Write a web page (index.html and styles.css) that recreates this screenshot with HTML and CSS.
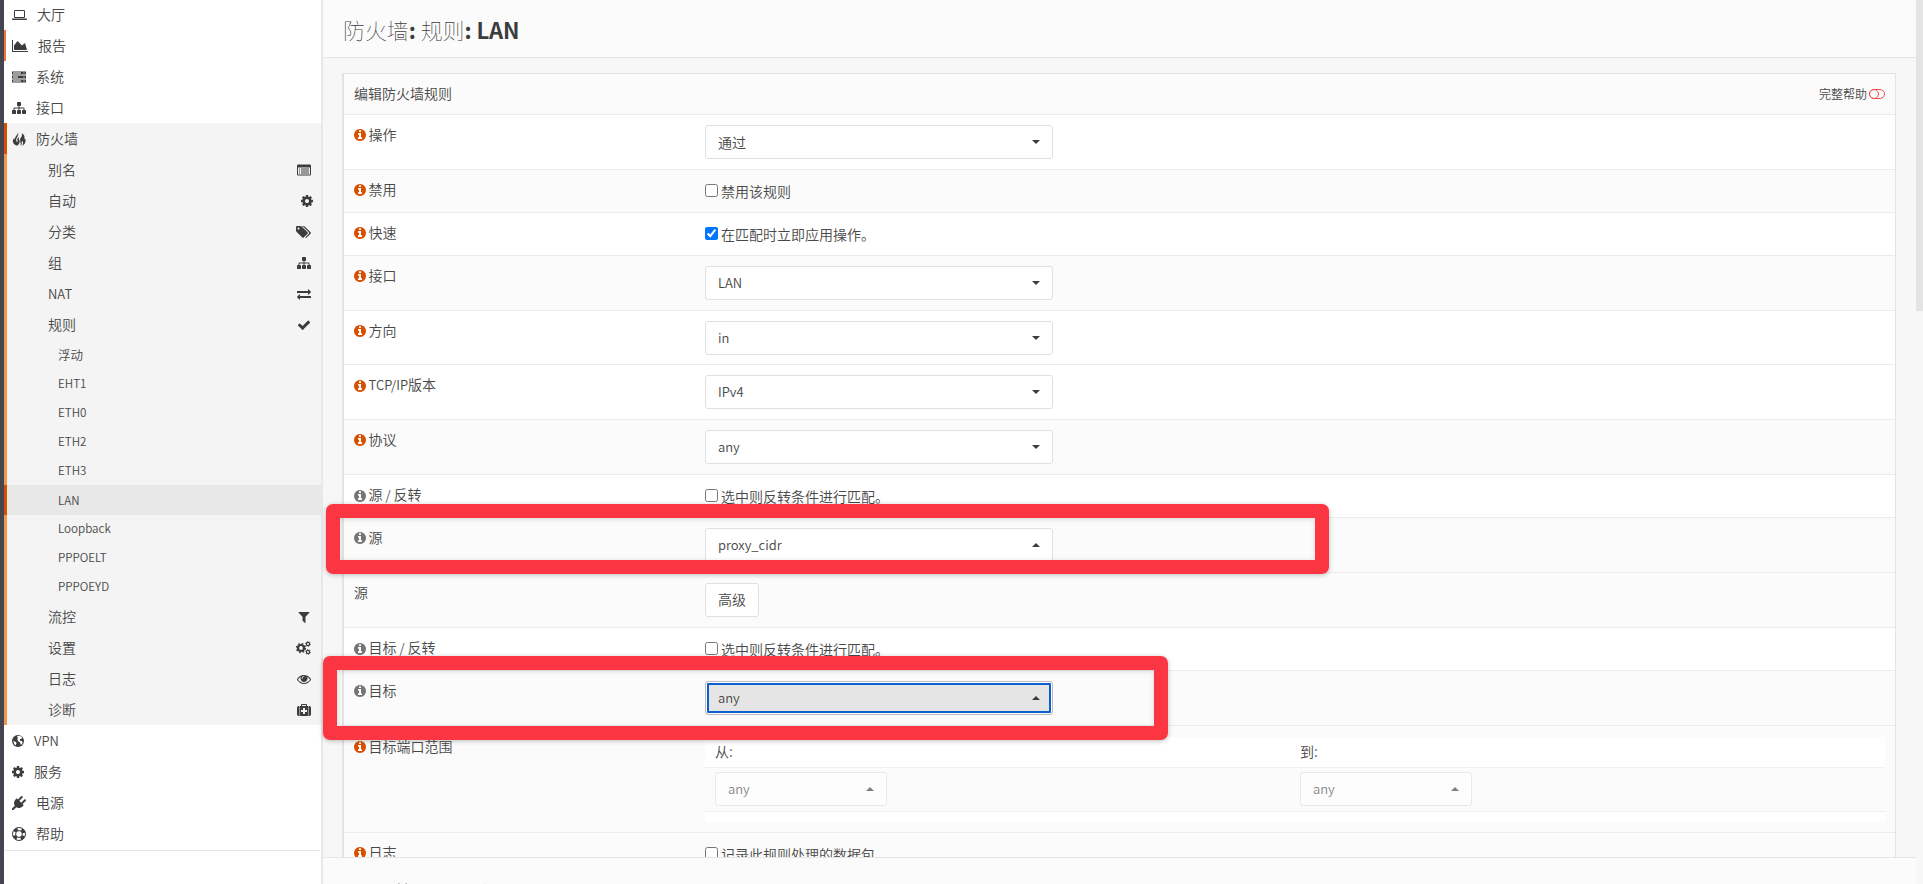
FILE: index.html
```html
<!DOCTYPE html>
<html lang="zh-CN">

<head>
    <meta charset="UTF-8">
    <meta name="viewport" content="width=device-width, initial-scale=1.0">
    <title>防火墙: 规则: LAN</title>
    <link rel="stylesheet" href="styles.css">
</head>

<body>
    <!-- icons -->
    <svg class="sprite">
        <symbol id="laptop" viewBox="0 0 1920 1792"><path d="M416 1280q-66 0-113-47t-47-113v-704q0-66 47-113t113-47h1088q66 0 113 47t47 113v704q0 66-47 113t-113 47h-1088zm-32-864v704q0 13 9.500 22.500t22.500 9.500h1088q13 0 22.500-9.500t9.500-22.500v-704q0-13-9.500-22.500t-22.500-9.500h-1088q-13 0-22.500 9.500t-9.500 22.500zm1376 928h160v96q0 40-47 68t-113 28h-1600q-66 0-113-28t-47-68v-96h1760z"/></symbol>
        <symbol id="area" viewBox="0 0 2048 1792"><path d="M2048 1536v128h-2048v-1536h128v1408h1920zm-384-1024l256 896h-1664v-576l448-576 576 576z"/></symbol>
        <symbol id="server" viewBox="0 -64 1792 1792"><path fill-rule="evenodd" d="M0 128h1792v384h-1792zM128 256v128h1024v-128zM1472 256v128h128v-128zM0 640h1792v384h-1792zM128 768v128h640v-128zM1472 768v128h128v-128zM0 1152h1792v384h-1792zM128 1280v128h1024v-128zM1472 1280v128h128v-128z"/></symbol>
        <symbol id="sitemap" viewBox="0 0 1792 1792"><path d="M1792 1248v320q0 40-28 68t-68 28h-320q-40 0-68-28t-28-68v-320q0-40 28-68t68-28h96v-192h-512v192h96q40 0 68 28t28 68v320q0 40-28 68t-68 28h-320q-40 0-68-28t-28-68v-320q0-40 28-68t68-28h96v-192h-512v192h96q40 0 68 28t28 68v320q0 40-28 68t-68 28h-320q-40 0-68-28t-28-68v-320q0-40 28-68t68-28h96v-192q0-52 38-90t90-38h512v-192h-96q-40 0-68-28t-28-68v-320q0-40 28-68t68-28h320q40 0 68 28t28 68v320q0 40-28 68t-68 28h-96v192h512q52 0 90 38t38 90v192h96q40 0 68 28t28 68z"/></symbol>
        <symbol id="fire" viewBox="0 0 14 14"><path d="M5.800 0.300C6.700 2 6.300 3.300 5.400 4.700 4.400 6.300 3.900 7.500 4.300 9c.2.800.7 1.200.9 1.100.5-.2.400-1 .2-1.700-.3-1.200.2-2.400 1.400-3.600-.2 1.300 0 2.100.5 3.200.9 1.900.2 3.900-2.100 5.700C2.800 13.200 1 11.900.9 9.600.8 8.200 1.300 7 2.200 5.700c0 .9.100 1.500.6 1.800C3 5.600 3.700 4.500 4.700 3.300 5.500 2.400 5.900 1.600 5.800.3zM9.500 1.200c2.200.9 3.100 2.300 3 4.100 0 .8-.2 1.400-.2 1.900.4-.1.600-.4.700-.9.600 1.200.7 2.500.4 3.700-.4 1.700-1.700 3.200-3.600 3.800 1-.9 1.400-1.900 1.200-3.100-.1-.7-.5-1.200-.6-1.900-.5.400-.8 1.200-.6 1.900.2 1-.1 2-1.400 3 .4-1 .4-1.800.2-2.900-.3-1.400-.7-2.500-.4-3.900.2-1.100 1-1.800 1.500-2.700.4-.9.500-1.900-.2-3z"/></symbol>
        <symbol id="listalt" viewBox="0 0 14 14"><path fill-rule="evenodd" d="M1.300 1.500h11.400q1.300 0 1.300 1.300v8.400q0 1.300-1.300 1.300h-11.400q-1.300 0-1.300-1.300v-8.400q0-1.300 1.300-1.300zM1 4.500v6.700q0 .3.300.3h11.400q.3 0 .3-.3v-6.700zM2 5.500h1v1h-1zM4 5.500h8v1h-8zM2 7.500h1v1h-1zM4 7.500h8v1h-8zM2 9.500h1v1h-1zM4 9.500h8v1h-8z"/></symbol>
        <symbol id="cog" viewBox="128 0 1536 1792"><path d="M1152 896q0-106-75-181t-181-75-181 75-75 181 75 181 181 75 181-75 75-181zm512-109v222q0 12-8 23t-20 13l-185 28q-19 54-39 91 35 50 107 138 10 12 10 25t-9 23q-27 37-99 108t-94 71q-12 0-26-9l-138-108q-44 23-91 38-16 136-29 186-7 28-36 28h-222q-14 0-24.500-8.500t-11.500-21.500l-28-184q-49-16-90-37l-141 107q-10 9-25 9-14 0-25-11-126-114-165-168-7-10-7-23 0-12 8-23 15-21 51-66.500t54-70.500q-27-50-41-99l-183-27q-13-2-21-12.500t-8-23.500v-222q0-12 8-23t19-13l186-28q14-46 39-92-40-57-107-138-10-12-10-24 0-10 9-23 26-36 98.500-107.500t94.500-71.500q13 0 26 10l138 107q44-23 91-38 16-136 29-186 7-28 36-28h222q14 0 24.500 8.500t11.500 21.500l28 184q49 16 90 37l142-107q9-9 24-9 13 0 25 10 129 119 165 170 7 8 7 22 0 12-8 23-15 21-51 66.500t-54 70.500q26 50 41 98l183 28q13 2 21 12.500t8 23.500z"/></symbol>
        <symbol id="tags" viewBox="0 0 1920 1792"><path d="M448 448q0-53-37.500-90.500t-90.500-37.500-90.500 37.500-37.500 90.500 37.500 90.500 90.500 37.500 90.500-37.500 37.500-90.500zm1067 576q0 53-37 90l-491 492q-39 37-91 37-53 0-90-37l-715-716q-38-37-64.500-101t-26.500-117v-416q0-52 38-90t90-38h416q53 0 117 26.500t102 64.500l715 714q37 39 37 91zm384 0q0 53-37 90l-491 492q-39 37-91 37-36 0-59-14t-53-45l470-470q37-37 37-90 0-52-37-91l-715-714q-38-38-102-64.500t-117-26.500h224q53 0 117 26.500t102 64.500l715 714q37 39 37 91z"/></symbol>
        <symbol id="exchange" viewBox="0 0 1792 1792"><path d="M1792 1184v192q0 13-9.500 22.500t-22.500 9.500h-1376v192q0 13-9.500 22.500t-22.500 9.500q-12 0-24-10l-319-320q-9-9-9-22 0-14 9-23l320-320q9-9 23-9 13 0 22.500 9.500t9.500 22.500v192h1376q13 0 22.500 9.500t9.500 22.500zm0-544q0 14-9 23l-320 320q-9 9-23 9-13 0-22.500-9.500t-9.500-22.500v-192h-1376q-13 0-22.500-9.500t-9.500-22.500v-192q0-13 9.500-22.500t22.500-9.500h1376v-192q0-14 9-23t23-9q12 0 24 10l319 319q9 9 9 23z"/></symbol>
        <symbol id="check" viewBox="0 0 1792 1792"><path d="M1671 566q0 40-28 68l-724 724-136 136q-28 28-68 28t-68-28l-136-136-362-362q-28-28-28-68t28-68l136-136q28-28 68-28t68 28l294 295 656-657q28-28 68-28t68 28l136 136q28 28 28 68z"/></symbol>
        <symbol id="filter" viewBox="0 0 1792 1792"><path d="M1595 295q17 41-14 70l-493 493v742q0 42-39 59-13 5-25 5-27 0-45-19l-256-256q-19-19-19-45v-486l-493-493q-31-29-14-70 17-39 59-39h1280q42 0 59 39z"/></symbol>
        <symbol id="cogs" viewBox="0 0 15 14"><g fill="none" stroke="currentColor"><circle cx="5" cy="7" r="3" stroke-width="2.200"/><circle cx="5" cy="7" r="4.500" stroke-width="1.300" stroke-dasharray="1.770"/><circle cx="12" cy="3" r="1.600" stroke-width="1.200"/><circle cx="12" cy="3" r="2.500" stroke-width=".8" stroke-dasharray="1.300"/><circle cx="12" cy="11" r="1.600" stroke-width="1.200"/><circle cx="12" cy="11" r="2.500" stroke-width=".8" stroke-dasharray="1.300"/></g></symbol>
        <symbol id="eye" viewBox="0 0 1792 1792"><path d="M1664 960q-152-236-381-353 61 104 61 225 0 185-131.500 316.500t-316.500 131.500-316.500-131.500-131.500-316.500q0-121 61-225-229 117-381 353 133 205 333.500 326.500t434.500 121.500 434.500-121.500 333.500-326.500zm-720-384q0-20-14-34t-34-14q-125 0-214.500 89.500t-89.500 214.500q0 20 14 34t34 14 34-14 14-34q0-86 61-147t147-61q20 0 34-14t14-34zm848 384q0 34-20 69-140 230-376.500 368.500t-499.500 138.500-499.500-139-376.500-368q-20-35-20-69t20-69q140-229 376.500-368t499.500-139 499.500 139 376.500 368q20 35 20 69z"/></symbol>
        <symbol id="medkit" viewBox="0 0 1792 1792"><path d="M1280 1120v-192q0-14-9-23t-23-9h-224v-224q0-14-9-23t-23-9h-192q-14 0-23 9t-9 23v224h-224q-14 0-23 9t-9 23v192q0 14 9 23t23 9h224v224q0 14 9 23t23 9h192q14 0 23-9t9-23v-224h224q14 0 23-9t9-23zm-640-736h512v-128h-512v128zm-384 0v1280h-32q-92 0-158-66t-66-158v-832q0-92 66-158t158-66h32zm1216 0v1280h-1152v-1280h192v-160q0-40 28-68t68-28h576q40 0 68 28t28 68v160h192zm320 224v832q0 92-66 158t-158 66h-32v-1280h32q92 0 158 66t66 158z"/></symbol>
        <symbol id="globe" viewBox="0 0 12 14"><circle cx="6" cy="7" r="6"/><path class="land" d="M5 2.200l2.300-.4 2 .7 1 1.400-1.100 1-.7-.2-.8 1.100.9 1.400 1.200-.1.900.8-.5 1.700-1.400 1.300-.4-1.600-1.200-1.500-1.400-.8.100-1.300-.9-.5.900-.8-.4-.9zM1.200 6.600l1.500 1 1.100.4.900 1.300-.8.900.1 1.300-1.700-1.300z"/></symbol>
        <symbol id="plug" viewBox="0 0 1792 1792"><path d="M1755 453q37 38 37 90.500t-37 90.500l-401 400 150 150-160 160q-163 163-389.500 186.500t-411.500-100.500l-362 362h-181v-181l362-362q-124-185-100.500-411.500t186.500-389.500l160-160 150 150 400-401q38-37 91-37t90 37 37 90.500-37 90.500l-400 401 234 234 401-400q38-37 91-37t90 37z"/></symbol>
        <symbol id="ring" viewBox="0 0 14 14"><g fill="none" stroke="currentColor"><circle cx="7" cy="7" r="6.500"/><circle cx="7" cy="7" r="3.400"/><circle cx="7" cy="7" r="5" stroke-width="3.200" stroke-dasharray="3.854 4" stroke-dashoffset="-2"/></g></symbol>
        <symbol id="info" viewBox="128 0 1536 1792"><path d="M1152 1376v-160q0-14-9-23t-23-9h-96v-512q0-14-9-23t-23-9h-320q-14 0-23 9t-9 23v160q0 14 9 23t23 9h96v320h-96q-14 0-23 9t-9 23v160q0 14 9 23t23 9h448q14 0 23-9t9-23zm-128-896v-160q0-14-9-23t-23-9h-192q-14 0-23 9t-9 23v160q0 14 9 23t23 9h192q14 0 23-9t9-23zm640 416q0 209-103 385.500t-279.500 279.500-385.500 103-385.500-103-279.500-279.500-103-385.500 103-385.500 279.500-279.500 385.500-103 385.500 103 279.500 279.500 103 385.500z"/></symbol>
    </svg>

    <aside class="sidebar">
        <ul class="menu">
            <li><svg class="icon w15"><use href="#laptop"/></svg>大厅</li>
            <li class="hovered"><svg class="icon w16"><use href="#area"/></svg>报告</li>
            <li><svg class="icon"><use href="#server"/></svg>系统</li>
            <li><svg class="icon"><use href="#sitemap"/></svg>接口</li>
            <li class="open"><svg class="icon"><use href="#fire"/></svg>防火墙</li>
        </ul>
        <ul class="submenu">
            <li>别名<svg class="icon"><use href="#listalt"/></svg></li>
            <li>自动<svg class="icon w12"><use href="#cog"/></svg></li>
            <li>分类<svg class="icon w15"><use href="#tags"/></svg></li>
            <li>组<svg class="icon"><use href="#sitemap"/></svg></li>
            <li class="latin">NAT<svg class="icon"><use href="#exchange"/></svg></li>
            <li>规则<svg class="icon"><use href="#check"/></svg></li>
            <li class="sub">浮动</li>
            <li class="sub latin">EHT1</li>
            <li class="sub latin">ETH0</li>
            <li class="sub latin">ETH2</li>
            <li class="sub latin">ETH3</li>
            <li class="sub latin active">LAN</li>
            <li class="sub latin">Loopback</li>
            <li class="sub latin">PPPOELT</li>
            <li class="sub latin">PPPOEYD</li>
            <li>流控<svg class="icon"><use href="#filter"/></svg></li>
            <li>设置<svg class="icon w15"><use href="#cogs"/></svg></li>
            <li>日志<svg class="icon"><use href="#eye"/></svg></li>
            <li>诊断<svg class="icon"><use href="#medkit"/></svg></li>
        </ul>
        <ul class="menu bottom">
            <li class="latin"><svg class="icon w12"><use href="#globe"/></svg>VPN</li>
            <li><svg class="icon w12"><use href="#cog"/></svg>服务</li>
            <li><svg class="icon"><use href="#plug"/></svg>电源</li>
            <li><svg class="icon"><use href="#ring"/></svg>帮助</li>
        </ul>
    </aside>

    <main class="page">
        <header class="page-head">
            <h1><span>防火墙</span>: <span>规则</span>: LAN</h1>
        </header>

        <section class="panel">
            <div class="panel-head">
                <span>编辑防火墙规则</span>
                <span class="help">完整帮助<svg class="toggle" viewBox="0 0 16 10"><rect x=".5" y=".5" width="15" height="9" rx="4.500"/><circle cx="5" cy="5" r="4.500"/></svg></span>
            </div>
            <div class="row white">
                <div class="name"><svg class="info"><use href="#info"/></svg>操作</div>
                <div class="select">通过<i class="caret"></i></div>
            </div>
            <div class="row short">
                <div class="name"><svg class="info"><use href="#info"/></svg>禁用</div>
                <label><input type="checkbox">禁用该规则</label>
            </div>
            <div class="row short white">
                <div class="name"><svg class="info"><use href="#info"/></svg>快速</div>
                <label><input type="checkbox" checked>在匹配时立即应用操作。</label>
            </div>
            <div class="row">
                <div class="name"><svg class="info"><use href="#info"/></svg>接口</div>
                <div class="select latin">LAN<i class="caret"></i></div>
            </div>
            <div class="row white direction">
                <div class="name"><svg class="info"><use href="#info"/></svg>方向</div>
                <div class="select latin">in<i class="caret"></i></div>
            </div>
            <div class="row white">
                <div class="name"><svg class="info"><use href="#info"/></svg><span><small>TCP/IP</small>版本</span></div>
                <div class="select latin">IPv4<i class="caret"></i></div>
            </div>
            <div class="row">
                <div class="name"><svg class="info"><use href="#info"/></svg>协议</div>
                <div class="select latin">any<i class="caret"></i></div>
            </div>
            <div class="row short white">
                <div class="name"><svg class="info muted"><use href="#info"/></svg><span>源<small> / </small>反转</span></div>
                <label><input type="checkbox">选中则反转条件进行匹配。</label>
            </div>
            <div class="row">
                <div class="name"><svg class="info muted"><use href="#info"/></svg>源</div>
                <div class="select latin">proxy_cidr<i class="caret up"></i></div>
            </div>
            <div class="row">
                <div class="name">源</div>
                <div class="btn">高级</div>
            </div>
            <div class="row short white">
                <div class="name"><svg class="info muted"><use href="#info"/></svg><span>目标<small> / </small>反转</span></div>
                <label><input type="checkbox">选中则反转条件进行匹配。</label>
            </div>
            <div class="row">
                <div class="name"><svg class="info muted"><use href="#info"/></svg>目标</div>
                <div class="select latin focus">any<i class="caret up"></i></div>
            </div>
            <div class="row ports-row">
                <div class="name"><svg class="info"><use href="#info"/></svg>目标端口范围</div>
                <div class="ports">
                    <div class="ports-head"><span>从:</span><span>到:</span></div>
                    <div class="ports-body">
                        <div class="select latin disabled">any<i class="caret up"></i></div>
                        <div class="select latin disabled">any<i class="caret up"></i></div>
                    </div>
                    <div class="ports-foot"></div>
                </div>
            </div>
            <div class="row short">
                <div class="name"><svg class="info"><use href="#info"/></svg>日志</div>
                <label><input type="checkbox">记录此规则处理的数据包</label>
            </div>
        </section>

        <footer class="page-foot"><a>OPNsense</a> (c) 2014-2024 <a>Deciso B.V.</a></footer>
    </main>

    <div class="scrollbar"></div>
    <div class="mark mark-source"></div>
    <div class="mark mark-target"></div>
</body>

</html>
```
FILE: styles.css
```css
* {
    margin: 0;
    padding: 0;
    box-sizing: border-box;
    list-style: none;
}

body {
    display: flex;
    height: 884px;
    overflow: hidden;
    position: relative;
    background: #f7f7f7;
    color: #484847;
    font: 350 14px/20px "Noto Sans CJK SC", sans-serif;
}

.sprite {
    display: none;
}

.icon {
    width: 14px;
    height: 14px;
    margin-top: 2px;
    color: #3c3c3b;
    fill: currentColor;
    flex: none;
}

.w12 {
    width: 12px;
}

.w15 {
    width: 15px;
}

.w16 {
    width: 16px;
}

.land {
    fill: #fff;
}

small {
    font-size: 13px;
}

/* sidebar */
.sidebar {
    width: 323px;
    height: 884px;
    flex: none;
    background: #fff;
    border-left: 4px solid #45454f;
    border-right: 2px solid #e8e8e8;
}

.menu {
    margin-top: -1px;
}

.menu li {
    height: 31px;
    display: flex;
    align-items: center;
    gap: 10px;
    padding: 0 0 2px 8px;
}

.menu .hovered {
    border-left: 2px solid #f0743c;
    padding-left: 6px;
}

.menu .open {
    background: #f4f4f4;
    border-left: 3px solid #d94f00;
    padding-left: 5px;
}

.menu.bottom {
    margin: 0 1px;
    height: 126px;
    border-bottom: 1px solid #e5e5e5;
}

.menu.bottom li {
    padding-left: 7px;
}

.submenu {
    background: #f4f4f4;
    border-left: 3px solid #ee9850;
}

.submenu li {
    height: 31px;
    display: flex;
    align-items: center;
    justify-content: space-between;
    padding: 0 10px 2px 41px;
}

.submenu .w12 {
    margin-right: -2px;
}

.submenu .sub {
    height: 29px;
    padding-left: 51px;
    padding-bottom: 0;
    font-size: 12.500px;
}

.submenu .active {
    height: 30px;
    margin: 0 0 -1px -3px;
    padding-left: 51px;
    padding-bottom: 1px;
    background: #e8e8e8;
    border-left: 3px solid #d94f00;
}

.latin {
    font-size: 13px;
}

.sidebar li.latin {
    padding-bottom: 0;
}

.sidebar .latin .icon {
    margin-top: 0;
}

.submenu .sub.latin {
    padding-bottom: 1px;
    font-size: 11.600px;
}

/* page */
.page {
    width: 1593px;
    height: 884px;
    display: flex;
    flex-direction: column;
}

.page-head {
    height: 58px;
    flex: none;
    padding: 14px 20px;
    background: #fbfbfb;
    border-bottom: 1px solid #e5e5e5;
}

h1 {
    color: #3c3c3b;
    font-size: 22px;
    line-height: 30px;
    font-weight: 700;
    letter-spacing: -.1px;
}

h1 span {
    font-weight: 100;
}

.panel {
    height: 784px;
    flex: none;
    margin: 15px 20px 0 19px;
    overflow: hidden;
    background: #fbfbfb;
    border: 1px solid #e3e3e3;
    border-left-width: 2px;
    border-bottom: 0;
}

.panel-head {
    height: 40px;
    display: flex;
    align-items: center;
    justify-content: space-between;
    padding: 0 10px 2px;
}

.help {
    display: flex;
    align-items: center;
    gap: 2px;
    font-size: 12px;
    padding-top: 2px;
}

.toggle {
    width: 16px;
    height: 10px;
    fill: none;
    stroke: #f0504d;
}

.row {
    height: 55px;
    display: grid;
    grid-template-columns: 351px 1fr;
    align-items: start;
    padding: 10px 10px 0;
    border-top: 1px solid #ebebeb;
}

.short {
    height: 43px;
}

.direction {
    height: 54.400px;
}

.white {
    background: #fff;
}

.name {
    display: flex;
    align-items: center;
    gap: 3px;
    line-height: 18px;
}

.info {
    width: 12px;
    height: 14px;
    margin-top: 2px;
    margin-left: -.5px;
    fill: #d94f00;
}

.info.muted {
    fill: #757575;
}

.row label {
    display: flex;
    align-items: center;
    gap: 3px;
    padding-top: 1px;
}

input {
    width: 13px;
    height: 13px;
    margin-top: -1px;
    accent-color: #0075ff;
}

.select {
    width: 348px;
    height: 34px;
    display: flex;
    align-items: center;
    justify-content: space-between;
    padding: 0 12px;
    background: #fff;
    border: 1px solid #e0e0e0;
    border-radius: 3px;
    line-height: 18px;
}

.caret {
    border: 4px solid transparent;
    border-top-color: #3c3c3b;
    border-bottom: 0;
}

.caret.up {
    border-top: 0;
    border-bottom: 4px solid #3c3c3b;
}

.btn {
    width: 54px;
    height: 34px;
    line-height: 31px;
    text-align: center;
    background: #fff;
    border: 1px solid #e0e0e0;
    border-radius: 3px;
}

.focus {
    background: #e5e5e5;
    border-color: #bdbdbd;
    box-shadow: inset 0 0 0 1px #fff;
    outline: 2px solid #0b5fce;
    outline-offset: -4px;
}

.ports-row {
    height: 107px;
    padding-top: 10.600px;
}

.ports-head {
    height: 30px;
    display: grid;
    grid-template-columns: 585px 1fr;
    align-items: center;
    padding: 0 0 2px 10px;
    background: #fff;
}

.ports-body {
    height: 45px;
    display: grid;
    grid-template-columns: 585px 1fr;
    align-items: center;
    padding-left: 10px;
    border-top: 1px solid #f0f0f0;
    border-bottom: 1px solid #f0f0f0;
}

.ports-foot {
    height: 10px;
    background: #fff;
}

.disabled {
    width: 172px;
    opacity: .65;
}

.page-foot {
    flex: none;
    height: 70px;
    padding: 19px 20px;
    border-top: 1px solid #e5e5e5;
    background: #fbfbfb;
    font-size: 10.800px;
}

.page-foot a {
    color: #d94f00;
}

.scrollbar {
    width: 7px;
    height: 311px;
    background: #e4e4e4;
}

/* highlight frames over the form */
.mark {
    position: absolute;
    border: 14px solid #fb3541;
    border-radius: 7px;
    box-shadow: 0 1px 5px rgba(0, 0, 0, .25), inset 0 1px 5px rgba(0, 0, 0, .15);
}

.mark-source {
    left: 326px;
    top: 504px;
    width: 1003px;
    height: 70px;
}

.mark-target {
    left: 323px;
    top: 656px;
    width: 845px;
    height: 84px;
}
```
